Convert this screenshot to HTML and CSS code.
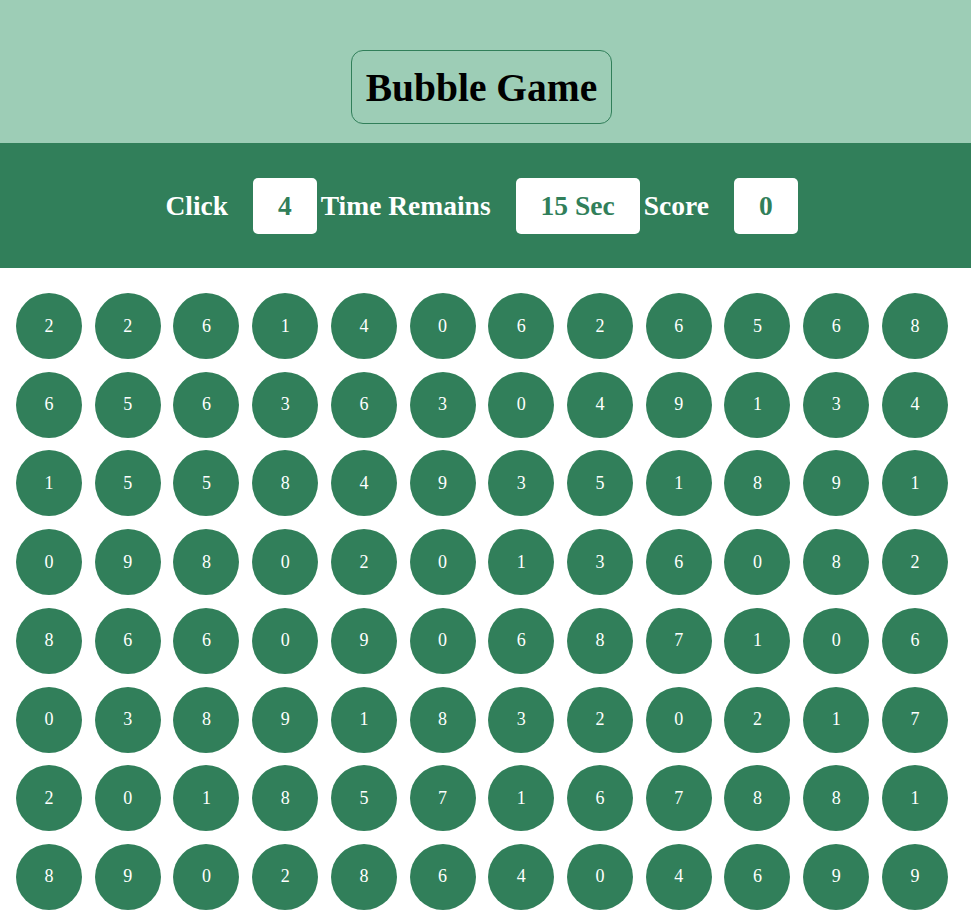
FILE: index.html
```html
<!DOCTYPE html>
<html>
<head>
<meta charset="utf-8">
<link rel="stylesheet" href="styles.css">
</head>
<body>
<div class="top">
  <h1 class="title">Bubble Game</h1>
</div>
<div class="bar">
  <span class="label">Click</span><span class="val">4</span>
  <span class="label">Time Remains</span><span class="val">15 Sec</span>
  <span class="label">Score</span><span class="val">0</span>
</div>
<div class="grid" id="grid"></div>
<script>
var data = [
"226140626568","656363049134","155849351891","098020136082",
"866090687106","038918320217","201857167881","890286404699"];
var g = document.getElementById('grid');
data.join('').split('').forEach(function(d){
  var b = document.createElement('div');
  b.className = 'bubble';
  b.textContent = d;
  g.appendChild(b);
});
</script>
</body>
</html>
```
FILE: styles.css
```css
html, body {
  margin: 0;
  padding: 0;
  background: #ffffff;
  font-family: "Liberation Serif", "Times New Roman", serif;
}
.top {
  background: #9dcdb6;
  height: 143px;
  box-sizing: border-box;
  padding: 50px 8px 0 0;
  display: flex;
  justify-content: center;
  align-items: flex-start;
}
.title {
  margin: 0;
  height: 74px;
  box-sizing: border-box;
  padding: 3px 14px 0;
  border: 1px solid #317f5a;
  border-radius: 12px;
  font-size: 39.5px;
  font-weight: bold;
  color: #000;
  display: flex;
  align-items: center;
  line-height: 1;
}
.bar {
  background: #317f5a;
  height: 125px;
  box-sizing: border-box;
  padding-right: 8px;
  display: flex;
  justify-content: center;
  align-items: center;
  font-size: 27.5px;
  font-weight: bold;
}
.label {
  color: #ffffff;
  margin-right: 25px;
  margin-left: 4px;
}
.label:first-child {
  margin-left: 0;
}
.val {
  background: #ffffff;
  color: #317f5a;
  height: 56px;
  padding: 0 25px;
  border-radius: 5px;
  display: flex;
  align-items: center;
  justify-content: center;
  box-sizing: border-box;
}
.grid {
  display: grid;
  grid-template-columns: repeat(12, 66px);
  grid-auto-rows: 66px;
  column-gap: 12.73px;
  row-gap: 12.71px;
  padding: 25px 0 0 16px;
}
.bubble {
  width: 66px;
  height: 66px;
  border-radius: 50%;
  background: #317f5a;
  color: #ffffff;
  font-size: 18px;
  display: flex;
  align-items: center;
  justify-content: center;
}
```
